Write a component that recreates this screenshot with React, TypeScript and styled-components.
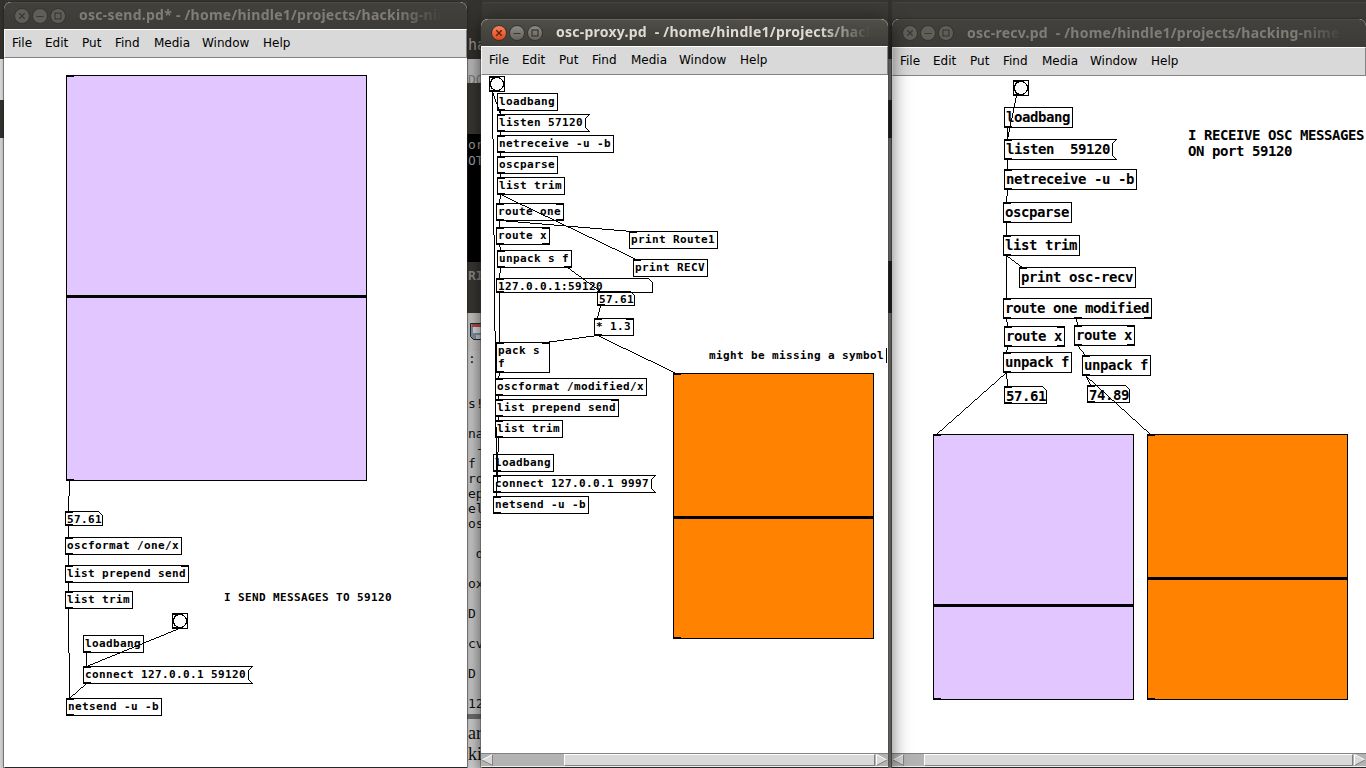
import React from "react";
import styled, { createGlobalStyle, css } from "styled-components";

const GlobalStyle = createGlobalStyle`
  html, body { margin: 0; padding: 0; }
  body { overflow: hidden; background: #3c3b37; }
  * { box-sizing: border-box; }
`;

const PURPLE = "#e2c6ff";
const ORANGE = "#ff8200";
const MONO = `"DejaVu Sans Mono", monospace`;

/* ---------- desktop ---------- */

const Desktop = styled.main`
  position: relative;
  width: 1366px;
  height: 768px;
  overflow: hidden;
  background: linear-gradient(#373632 0, #373632 2px, #45443f 2px, #3c3b37 4px, #3a3935 100%);
`;

const Backdrop = styled.div<{ $x: number; $w: number }>`
  position: absolute;
  left: ${(p) => p.$x}px;
  top: 0;
  width: ${(p) => p.$w}px;
  height: 768px;
  display: flex;
  flex-direction: column;
  overflow: hidden;
`;

const Band = styled.pre<{ $h: number; $bg: string; $fg?: string; $size?: number; $line?: number; $pad?: number; $serif?: boolean; $bold?: boolean }>`
  flex: none;
  margin: 0;
  overflow: hidden;
  height: ${(p) => p.$h}px;
  padding: ${(p) => p.$pad ?? 0}px 0 0 1px;
  background: ${(p) => p.$bg};
  color: ${(p) => p.$fg ?? "#111"};
  font-family: ${(p) => (p.$serif ? `"Liberation Serif", serif` : MONO)};
  font-weight: ${(p) => (p.$bold ? 700 : 400)};
  font-size: ${(p) => p.$size ?? 13}px;
  line-height: ${(p) => p.$line ?? 15}px;
`;

/* ---------- window chrome ---------- */

const Frame = styled.section<{ $x: number; $y: number; $w: number; $h: number; $active?: boolean }>`
  position: absolute;
  left: ${(p) => p.$x}px;
  top: ${(p) => p.$y}px;
  width: ${(p) => p.$w}px;
  height: ${(p) => p.$h}px;
  display: flex;
  flex-direction: column;
  overflow: hidden;
  border-radius: 7px 7px 0 0;
  background: #fff;
  ${(p) =>
    p.$active
      ? css`box-shadow: 0 0 0 1px rgba(60, 55, 48, 0.35), 0 5px 20px 2px rgba(0, 0, 0, 0.65);`
      : css`box-shadow: 0 0 0 1px rgba(40, 38, 34, 0.45), 0 2px 5px rgba(0, 0, 0, 0.35);`}
`;

const TitleBar = styled.header<{ $h: number; $active?: boolean }>`
  flex: none;
  height: ${(p) => p.$h}px;
  display: flex;
  align-items: center;
  gap: 2px;
  padding: 0 0 1px 10px;
  border-radius: 7px 7px 0 0;
  border-top: 1px solid ${(p) => (p.$active ? "#66645b" : "#4b4a45")};
  background: ${(p) => (p.$active ? "linear-gradient(#4f4e47, #3d3c38)" : "linear-gradient(#42413d, #3c3b37)")};
`;

const RoundButton = styled.span<{ $fill: string }>`
  flex: none;
  width: 16px;
  height: 16px;
  display: grid;
  place-items: center;
  border-radius: 50%;
  border: 1px solid #35342f;
  background: ${(p) => p.$fill};
`;

const Title = styled.h1<{ $active?: boolean; $fade: number; $w: number }>`
  margin: 0 0 1px 11px;
  width: ${(p) => p.$w}px;
  overflow: hidden;
  white-space: pre;
  font: 700 14px/22px "Noto Sans", sans-serif;
  letter-spacing: 0.25px;
  color: ${(p) => (p.$active ? "#dfdbd2" : "#807d78")};
  mask-image: linear-gradient(90deg, #000 ${(p) => p.$w - p.$fade}px, transparent ${(p) => p.$w}px);
`;

const MenuBar = styled.nav`
  flex: none;
  height: 29px;
  display: flex;
  align-items: center;
  padding: 0 0 2px 7px;
  background: #d9d9d9;
  border-top: 1px solid #fff;
  border-bottom: 1px solid #828282;
  border-right: 1px solid #828282;
  border-left: 1px solid #f4f4f4;
`;

const MenuItem = styled.span<{ $w: number }>`
  flex: none;
  width: ${(p) => p.$w}px;
  font: 12px/16px "DejaVu Sans", sans-serif;
  color: #000;
`;

const MENUS: [string, number][] = [
  ["File", 33],
  ["Edit", 37],
  ["Put", 33],
  ["Find", 39],
  ["Media", 48],
  ["Window", 61],
  ["Help", 40],
];

const Canvas = styled.div`
  position: relative;
  flex: 1;
  overflow: hidden;
  background: #fff;
`;

const Sheet = styled.div<{ $x: number; $y: number }>`
  position: absolute;
  left: ${(p) => -p.$x}px;
  top: ${(p) => -p.$y}px;
  width: 1366px;
  height: 768px;
`;

const ScrollBar = styled.div`
  flex: none;
  height: 14px;
  display: flex;
  align-items: stretch;
  background: #b3b3b3;
  border-top: 1px solid #828282;
  border-bottom: 1px solid #eee;
`;

const Trough = styled.div<{ $w: number }>`
  flex: none;
  width: ${(p) => p.$w}px;
`;

const Thumb = styled.div`
  flex: 1;
  background: #d9d9d9;
  border: 1px solid;
  border-color: #fff #828282 #828282 #fff;
`;

function Arrow({ right }: { right?: boolean }) {
  return (
    <svg width="13" height="12" viewBox="0 0 13 12">
      {right ? (
        <>
          <path d="M1.5 .5 V11.5 L12 6Z" fill="#d9d9d9" />
          <path d="M1.5 11.5 V.5 L12 6" fill="none" stroke="#fff" />
          <path d="M12 6 L1.5 11.5" stroke="#828282" />
        </>
      ) : (
        <>
          <path d="M11.5 .5 V11.5 L1 6Z" fill="#d9d9d9" />
          <path d="M11.5 .5 L1 6" stroke="#fff" />
          <path d="M1 6 L11.5 11.5 V.5" fill="none" stroke="#828282" />
        </>
      )}
    </svg>
  );
}

type WinProps = {
  x: number;
  y: number;
  w: number;
  h: number;
  titleH: number;
  title: string;
  titleW: number;
  fade: number;
  active?: boolean;
  scroll?: number;
  children: React.ReactNode;
};

function PatchWindow({ x, y, w, h, titleH, title, titleW, fade, active, scroll, children }: WinProps) {
  const grey = active ? "linear-gradient(#8b8980, #65635c)" : "#605e58";
  const glyph = active ? "#37362f" : "#3a3935";
  return (
    <Frame $x={x} $y={y} $w={w} $h={h} $active={active}>
      <TitleBar $h={titleH} $active={active}>
        <RoundButton $fill={active ? "linear-gradient(#f5815b, #e0481c)" : grey}>
          <svg width="8" height="8" viewBox="0 0 8 8"><path d="M1.3 1.3 6.7 6.7M6.7 1.3 1.3 6.7" stroke={active ? "#5c1d0b" : glyph} strokeWidth="1.3" /></svg>
        </RoundButton>
        <RoundButton $fill={grey}>
          <svg width="8" height="8" viewBox="0 0 8 8"><path d="M.5 4.5H7.5" stroke={glyph} /></svg>
        </RoundButton>
        <RoundButton $fill={grey}>
          <svg width="8" height="8" viewBox="0 0 8 8"><rect x="1" y="1" width="6" height="6" fill="none" stroke={glyph} strokeWidth="1.2" /></svg>
        </RoundButton>
        <Title $active={active} $w={titleW} $fade={fade}>{title}</Title>
      </TitleBar>
      <MenuBar>
        {MENUS.map(([label, mw]) => (
          <MenuItem key={label} $w={mw}>{label}</MenuItem>
        ))}
      </MenuBar>
      <Canvas>
        <Sheet $x={x} $y={y + titleH + 29}>{children}</Sheet>
      </Canvas>
      {scroll !== undefined && (
        <ScrollBar>
          <Arrow />
          <Trough $w={scroll} />
          <Thumb />
          <Arrow right />
        </ScrollBar>
      )}
    </Frame>
  );
}

/* ---------- patch elements ---------- */

const BigContext = React.createContext(false);

const patchFont = (big: boolean) =>
  big
    ? css`font: 700 14px/16px ${MONO}; letter-spacing: -0.43px;`
    : css`font: 700 11px/13px ${MONO}; letter-spacing: 0.378px;`;

const Item = styled.div<{ $x: number; $y: number; $w: number; $h: number; $boxed?: boolean; $big: boolean; $pad: number }>`
  position: absolute;
  left: ${(p) => p.$x}px;
  top: ${(p) => p.$y}px;
  width: ${(p) => p.$w}px;
  height: ${(p) => p.$h}px;
  padding: ${(p) => p.$pad}px 0 0 2px;
  ${(p) => p.$boxed && css`box-shadow: inset 0 0 0 1px #000;`}
  white-space: pre;
  color: #000;
  ${(p) => patchFont(p.$big)}
`;

const Outline = styled.svg`
  position: absolute;
  left: 0;
  top: 0;
  overflow: visible;
  shape-rendering: crispEdges;
`;

/* Inlets sit in a row along the top edge, outlets along the bottom edge. */
const PortRow = styled.span<{ $out?: boolean }>`
  position: absolute;
  left: 0;
  right: 0;
  ${(p) => (p.$out ? "bottom: 0;" : "top: 0;")}
  display: flex;
  justify-content: space-between;
`;

const Port = styled.i`
  width: 8px;
  height: 2px;
  background: #000;
`;

function Ports({ n, out }: { n: number; out?: boolean }) {
  return (
    <PortRow $out={out}>
      {Array.from({ length: n }, (_, i) => (
        <Port key={i} />
      ))}
    </PortRow>
  );
}

type NodeProps = { x: number; y: number; t: string; i?: number; o?: number; w?: number };

function Obj({ x, y, t, i = 1, o = 1 }: NodeProps) {
  const big = React.useContext(BigContext);
  const lines = t.split("\n");
  const cols = Math.max(...lines.map((l) => l.length));
  const w = cols * (big ? 8 : 7) + 5;
  const h = (big ? 21 : 18) + (lines.length - 1) * 13;
  return (
    <Item $x={x} $y={y} $w={w} $h={h} $big={big} $pad={2} $boxed>
      {t}
      <Ports n={i} />
      <Ports n={o} out />
    </Item>
  );
}

function Msg({ x, y, t }: NodeProps) {
  const big = React.useContext(BigContext);
  const w = t.length * (big ? 8 : 7) + 5;
  const h = big ? 21 : 18;
  return (
    <Item $x={x} $y={y} $w={w} $h={h} $big={big} $pad={2}>
      <Outline width={w + 4} height={h}>
        <path d={`M.5 .5H${w + 3.5}L${w - 0.5} 4.5V${h - 4.5}L${w + 3.5} ${h - 0.5}H.5Z`} fill="none" stroke="#000" />
      </Outline>
      {t}
      <Ports n={1} />
      <Ports n={1} out />
    </Item>
  );
}

function Atom({ x, y, t, w: width }: NodeProps) {
  const big = React.useContext(BigContext);
  const w = width ?? (big ? 43 : 38);
  const h = big ? 18 : 15;
  return (
    <Item $x={x} $y={y} $w={w} $h={h} $big={big} $pad={2}>
      <Outline width={w} height={h}>
        <path d={`M.5 .5H${w - 4.5}L${w - 0.5} 4.5V${h - 0.5}H.5Z`} fill="none" stroke="#000" />
      </Outline>
      {t}
      <Ports n={1} />
      <Ports n={1} out />
    </Item>
  );
}

function Note({ x, y, t }: NodeProps) {
  const big = React.useContext(BigContext);
  return <Item $x={x - 2} $y={y} $w={200} $h={40} $big={big} $pad={0}>{t}</Item>;
}

function Bang({ x, y }: { x: number; y: number }) {
  return (
    <Item $x={x} $y={y} $w={16} $h={16} $big={false} $pad={0} $boxed>
      <Outline width="16" height="16">
        <circle cx="8" cy="8" r="6.6" fill="#fcfcfc" stroke="#000" strokeWidth="1.2" />
      </Outline>
      <Ports n={1} />
      <Ports n={1} out />
    </Item>
  );
}

const SliderBox = styled.div<{ $x: number; $y: number; $w: number; $h: number; $c: string }>`
  position: absolute;
  left: ${(p) => p.$x}px;
  top: ${(p) => p.$y}px;
  width: ${(p) => p.$w}px;
  height: ${(p) => p.$h}px;
  box-shadow: inset 0 0 0 1px #000;
  background: ${(p) => p.$c};
  padding-top: 1px;
`;

const Knob = styled.div<{ $y: number }>`
  height: 3px;
  margin-top: ${(p) => p.$y - 1}px;
  background: #000;
`;

function Slider({ x, y, w, h, k, c }: { x: number; y: number; w: number; h: number; k: number; c: string }) {
  return (
    <SliderBox $x={x} $y={y} $w={w} $h={h} $c={c}>
      <Ports n={1} />
      <Ports n={1} out />
      <Knob $y={k - y} />
    </SliderBox>
  );
}

const WireLayer = styled.svg`
  position: absolute;
  left: 0;
  top: 0;
  shape-rendering: crispEdges;
  pointer-events: none;
`;

/* An aliased one-pixel line, as a path of single pixels along the longer axis. */
function wirePath([x1, y1, x2, y2]: number[]) {
  const dx = x2 - x1;
  const dy = y2 - y1;
  const n = Math.max(Math.abs(dx), Math.abs(dy));
  let d = "";
  for (let s = 0; s <= n; s++) {
    const px = Math.round(x1 + (dx * s) / n);
    const py = Math.round(y1 + (dy * s) / n);
    d += `M${px} ${py}h1v1h-1z`;
  }
  return d;
}

function Wires({ list }: { list: number[][] }) {
  return (
    <WireLayer width="1366" height="768">
      {list.map((wire, i) => (
        <path key={i} d={wirePath(wire)} fill="#000" />
      ))}
    </WireLayer>
  );
}

const Caret = styled.div`
  position: absolute;
  left: 886px;
  top: 348px;
  width: 1px;
  height: 15px;
  background: #000;
`;

/* ---------- patches ---------- */

const SEND_WIRES = [
  [69, 480, 68, 511], [68, 525, 68, 537], [68, 554, 68, 565], [68, 582, 68, 591],
  [68, 608, 69, 698], [179, 628, 86, 666], [86, 652, 86, 666], [86, 683, 69, 698],
];

const PROXY_WIRES = [
  [492, 91, 496, 475], [492, 91, 500, 114], [500, 110, 500, 114], [500, 131, 500, 135],
  [500, 152, 500, 156], [500, 173, 500, 177], [500, 194, 499, 203], [500, 194, 636, 259],
  [499, 220, 499, 227], [499, 220, 632, 231], [499, 244, 500, 250], [500, 267, 499, 278],
  [567, 267, 600, 291], [499, 292, 499, 342], [600, 305, 597, 318], [597, 335, 545, 342],
  [597, 335, 676, 373], [499, 372, 498, 378], [498, 395, 498, 399], [498, 416, 498, 420],
  [498, 437, 496, 496], [496, 471, 496, 475], [496, 492, 496, 496],
];

const RECV_WIRES = [
  [1016, 95, 1007, 139], [1007, 127, 1007, 139], [1007, 159, 1007, 169], [1007, 189, 1006, 202],
  [1006, 222, 1006, 235], [1006, 255, 1022, 267], [1006, 255, 1006, 298], [1006, 318, 1007, 326],
  [1076, 318, 1077, 325], [1007, 346, 1006, 352], [1077, 345, 1085, 355], [1006, 372, 1007, 386],
  [1006, 372, 936, 434], [1085, 375, 1090, 385], [1085, 375, 1150, 434],
];

const EDITOR_TEXT =
  ":\n\n\ns!\n\nna\n -\nf\nro\nep\nel\nos\n\n d\n\nox\n\nD\n\ncv\n\nD\n\n12";

export default function App() {
  return (
    <>
      <GlobalStyle />
      <Desktop>
        <Backdrop $x={0} $w={5}>
          <Band $h={59} $bg="#33322e" />
          <Band $h={41} $bg="#dcdcdc" />
          <Band $h={38} $bg="#33322e" />
          <Band $h={630} $bg="#d4d4d4" />
        </Backdrop>
        <Backdrop $x={467} $w={15}>
          <Band $h={59} $bg="#34332f" $fg="#a5a29b" $size={15} $pad={37} $line={16}>ha</Band>
          <Band $h={24} $bg="#c9c9c9" $fg="#888" $pad={13}>DO</Band>
          <Band $h={51} $bg="#3c3b37" />
          <Band $h={128} $bg="#000" $fg="#aaa" $pad={3} $line={16}>{"or\nOT"}</Band>
          <Band $h={51} $bg="#3c3b37" $fg="#96938c" $bold $pad={6}>RI</Band>
          <Band $h={38} $bg="#d6d3d0">
            <svg width="15" height="36" viewBox="0 0 15 36">
              <path d="M2.5 10.5H15V26.5H5.5L2.5 23.5Z" fill="#8b9cb0" stroke="#222c38" />
              <path d="M4 11H15V14H4Z" fill="#c8524a" />
              <path d="M5 14H15V20H5Z" fill="#eee" />
              <path d="M8 22H15V26H8Z" fill="#d8dce0" />
            </svg>
          </Band>
          <Band $h={363} $bg="#d8d8d8">{EDITOR_TEXT}</Band>
          <Band $h={5} $bg="#777" />
          <Band $h={49} $bg="#dedede" $serif $size={18} $line={21} $pad={4}>{"ar\nki"}</Band>
        </Backdrop>
        <Backdrop $x={888} $w={4}>
          <Band $h={59} $bg="#33322e" />
          <Band $h={41} $bg="#8f8f8f" />
          <Band $h={38} $bg="#2a2926" />
          <Band $h={123} $bg="#909090" />
          <Band $h={52} $bg="#2a2926" />
          <Band $h={455} $bg="#96948f" />
        </Backdrop>

        <BigContext.Provider value={true}>
          <PatchWindow x={892} y={19} w={474} h={748} titleH={28} title="osc-recv.pd  - /home/hindle1/projects/hacking-nime" titleW={378} fade={50} scroll={19}>
            <Bang x={1013} y={80} />
            <Obj x={1004} y={107} t="loadbang" i={0} />
            <Msg x={1004} y={139} t="listen  59120" />
            <Obj x={1004} y={169} t="netreceive -u -b" />
            <Obj x={1003} y={202} t="oscparse" />
            <Obj x={1003} y={235} t="list trim" />
            <Obj x={1019} y={267} t="print osc-recv" o={0} />
            <Obj x={1003} y={298} t="route one modified" o={3} />
            <Obj x={1004} y={326} t="route x" i={2} o={2} />
            <Obj x={1074} y={325} t="route x" i={2} o={2} />
            <Obj x={1003} y={352} t="unpack f" />
            <Obj x={1082} y={355} t="unpack f" />
            <Atom x={1004} y={386} t="57.61" />
            <Atom x={1087} y={385} t="74.89" />
            <Note x={1188} y={127} t={"I RECEIVE OSC MESSAGES\nON port 59120"} />
            <Slider x={933} y={434} w={201} h={266} k={604} c={PURPLE} />
            <Slider x={1147} y={434} w={201} h={266} k={577} c={ORANGE} />
            <Wires list={RECV_WIRES} />
          </PatchWindow>
        </BigContext.Provider>

        <PatchWindow x={481} y={19} w={407} h={748} titleH={27} title="osc-proxy.pd  - /home/hindle1/projects/hacking" titleW={314} fade={50} scroll={70} active>
          <Bang x={489} y={76} />
          <Obj x={497} y={93} t="loadbang" i={0} />
          <Msg x={497} y={114} t="listen 57120" />
          <Obj x={497} y={135} t="netreceive -u -b" />
          <Obj x={497} y={156} t="oscparse" />
          <Obj x={497} y={177} t="list trim" />
          <Obj x={496} y={203} t="route one" i={2} o={2} />
          <Obj x={496} y={227} t="route x" i={2} o={2} />
          <Obj x={497} y={250} t="unpack s f" o={2} />
          <Obj x={629} y={231} t="print Route1" o={0} />
          <Obj x={633} y={259} t="print RECV" o={0} />
          <Atom x={496} y={278} t="127.0.0.1:59120" w={157} />
          <Atom x={597} y={291} t="57.61" />
          <Obj x={594} y={318} t="* 1.3" i={2} />
          <Obj x={496} y={342} t={"pack s \nf"} i={2} />
          <Obj x={495} y={378} t="oscformat /modified/x" />
          <Obj x={495} y={399} t="list prepend send" i={2} />
          <Obj x={495} y={420} t="list trim" />
          <Obj x={493} y={454} t="loadbang" i={0} />
          <Msg x={493} y={475} t="connect 127.0.0.1 9997" />
          <Obj x={493} y={496} t="netsend -u -b" />
          <Note x={709} y={349} t="might be missing a symbol" />
          <Caret />
          <Slider x={673} y={373} w={201} h={266} k={516} c={ORANGE} />
          <Wires list={PROXY_WIRES} />
        </PatchWindow>

        <PatchWindow x={4} y={2} w={463} h={765} titleH={27} title="osc-send.pd* - /home/hindle1/projects/hacking-nime" titleW={364} fade={45}>
          <Slider x={66} y={75} w={301} h={406} k={295} c={PURPLE} />
          <Atom x={65} y={511} t="57.61" />
          <Obj x={65} y={537} t="oscformat /one/x" />
          <Obj x={65} y={565} t="list prepend send" i={2} />
          <Obj x={65} y={591} t="list trim" />
          <Bang x={172} y={613} />
          <Obj x={83} y={635} t="loadbang" i={0} />
          <Msg x={83} y={666} t="connect 127.0.0.1 59120" />
          <Obj x={66} y={698} t="netsend -u -b" />
          <Note x={224} y={591} t="I SEND MESSAGES TO 59120" />
          <Wires list={SEND_WIRES} />
        </PatchWindow>
      </Desktop>
    </>
  );
}
